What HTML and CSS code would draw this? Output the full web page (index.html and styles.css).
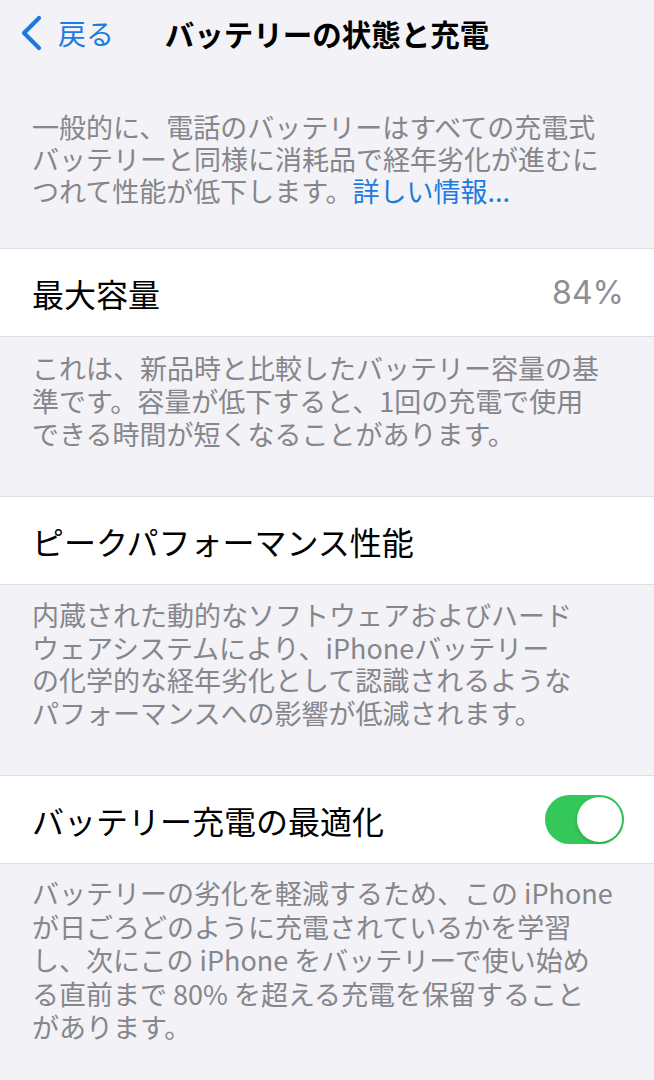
FILE: index.html
```html
<!DOCTYPE html>
<html lang="ja">
<head>
  <meta charset="UTF-8">
  <meta name="viewport" content="width=device-width, initial-scale=1.0">
  <title>バッテリーの状態と充電</title>
  <link rel="stylesheet" href="styles.css">
</head>
<body>
  <header class="nav">
    <a class="back" href="#">
      <svg class="chevron" width="26" height="36" viewBox="0 0 26 36">
        <path d="M21 3 L6 18 L21 33" fill="none" stroke="currentColor" stroke-width="4.2" stroke-linecap="round" stroke-linejoin="round"/>
      </svg>
      <span>戻る</span>
    </a>
    <h1 class="title">バッテリーの状態と充電</h1>
    <div></div>
  </header>

  <p class="note intro">
    一般的に、電話のバッテリーはすべての充電式<br>
    バッテリーと同様に消耗品で経年劣化が進むに<br>
    つれて性能が低下します。<a class="link" href="#">詳しい情報...</a>
  </p>

  <section class="group">
    <div class="cell">
      <span class="label">最大容量</span>
      <span class="value">84%</span>
    </div>
    <p class="note">
      これは、新品時と比較したバッテリー容量の基<br>
      準です。容量が低下すると、1回の充電で使用<br>
      できる時間が短くなることがあります。
    </p>
  </section>

  <section class="group">
    <div class="cell">
      <span class="label">ピークパフォーマンス性能</span>
    </div>
    <p class="note tight">
      内蔵された動的なソフトウェアおよびハード<br>
      ウェアシステムにより、iPhoneバッテリー<br>
      の化学的な経年劣化として認識されるような<br>
      パフォーマンスへの影響が低減されます。
    </p>
  </section>

  <section class="group">
    <div class="cell">
      <span class="label">バッテリー充電の最適化</span>
      <span class="toggle on"><span class="knob"></span></span>
    </div>
    <p class="note last">
      バッテリーの劣化を軽減するため、この iPhone<br>
      が日ごろどのように充電されているかを学習<br>
      し、次にこの iPhone をバッテリーで使い始め<br>
      る直前まで 80% を超える充電を保留すること<br>
      があります。
    </p>
  </section>
</body>
</html>
```

FILE: styles.css
```css
body {
  margin: 0;
  background: #f2f2f7;
  font-family: "Noto Sans CJK JP", "Noto Sans", sans-serif;
  color: #000;
  width: 654px;
  overflow: hidden;
}
.nav {
  display: grid;
  grid-template-columns: 1fr auto 1fr;
  align-items: center;
  height: 66px;
}
.back {
  display: flex;
  align-items: center;
  gap: 14px;
  padding-left: 18px;
  color: #1f7ae0;
  text-decoration: none;
  font-size: 28px;
}
.chevron {
  display: block;
}
.title {
  margin: 0;
  font-size: 29.5px;
  font-weight: 700;
}
.note {
  margin: 0;
  padding: 14px 32px 46px;
  font-size: 27px;
  line-height: 33px;
  color: #86868b;
}
.note.intro {
  padding: 45px 32px 41px;
  line-height: 32px;
}
.note.tight {
  line-height: 32.5px;
}
.note.last {
  padding-top: 12px;
  line-height: 33.5px;
}
.link {
  color: #1f7ae0;
  text-decoration: none;
}
.cell {
  display: flex;
  align-items: center;
  justify-content: space-between;
  height: 87px;
  padding: 0 30px 0 32px;
  background: #fff;
  border-top: 1px solid #dedee3;
  border-bottom: 1px solid #dedee3;
}
.label {
  font-size: 32px;
}
.value {
  font-size: 32px;
  color: #8e8e93;
  font-family: "Inter", "Noto Sans", sans-serif;
  font-weight: 400;
}
.toggle {
  display: flex;
  align-items: center;
  justify-content: flex-end;
  width: 79px;
  height: 49px;
  padding: 2px;
  box-sizing: border-box;
  border-radius: 25px;
  background: #34c759;
}
.knob {
  width: 45px;
  height: 45px;
  border-radius: 50%;
  background: #fff;
  box-shadow: 0 2px 4px rgba(0,0,0,0.15);
}
```
